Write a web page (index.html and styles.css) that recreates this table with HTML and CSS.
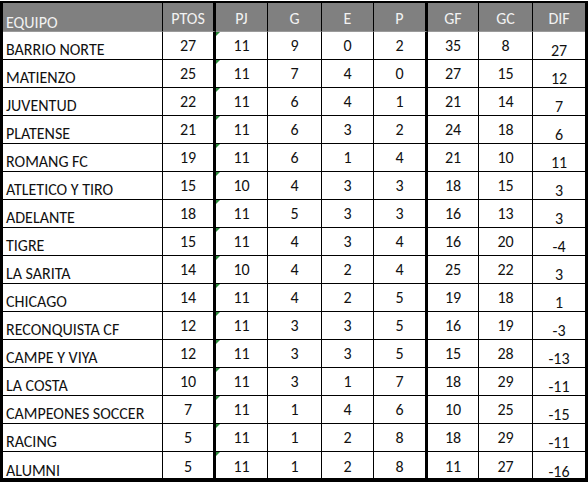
FILE: index.html
```html
<!DOCTYPE html>
<html lang="es">
<head>
<meta charset="utf-8">
<title>Tabla de posiciones</title>
<link rel="stylesheet" href="styles.css">
</head>
<body>
<div class="sheet">
  <div class="row head">
    <div class="c name">EQUIPO</div><div class="c thick">PTOS</div><div class="c">PJ</div><div class="c">G</div><div class="c">E</div><div class="c thick">P</div><div class="c">GF</div><div class="c">GC</div><div class="c last">DIF</div>
  </div>
  <div class="row"><div class="c name">BARRIO NORTE</div><div class="c thick">27</div><div class="c pj">11</div><div class="c">9</div><div class="c">0</div><div class="c thick">2</div><div class="c">35</div><div class="c">8</div><div class="c last dif">27</div></div>
  <div class="row"><div class="c name">MATIENZO</div><div class="c thick">25</div><div class="c pj">11</div><div class="c">7</div><div class="c">4</div><div class="c thick">0</div><div class="c">27</div><div class="c">15</div><div class="c last dif">12</div></div>
  <div class="row"><div class="c name">JUVENTUD</div><div class="c thick">22</div><div class="c pj">11</div><div class="c">6</div><div class="c">4</div><div class="c thick">1</div><div class="c">21</div><div class="c">14</div><div class="c last dif">7</div></div>
  <div class="row"><div class="c name">PLATENSE</div><div class="c thick">21</div><div class="c pj">11</div><div class="c">6</div><div class="c">3</div><div class="c thick">2</div><div class="c">24</div><div class="c">18</div><div class="c last dif">6</div></div>
  <div class="row"><div class="c name">ROMANG FC</div><div class="c thick">19</div><div class="c pj">11</div><div class="c">6</div><div class="c">1</div><div class="c thick">4</div><div class="c">21</div><div class="c">10</div><div class="c last dif">11</div></div>
  <div class="row"><div class="c name">ATLETICO Y TIRO</div><div class="c thick">15</div><div class="c pj">10</div><div class="c">4</div><div class="c">3</div><div class="c thick">3</div><div class="c">18</div><div class="c">15</div><div class="c last dif">3</div></div>
  <div class="row"><div class="c name">ADELANTE</div><div class="c thick">18</div><div class="c pj">11</div><div class="c">5</div><div class="c">3</div><div class="c thick">3</div><div class="c">16</div><div class="c">13</div><div class="c last dif">3</div></div>
  <div class="row"><div class="c name">TIGRE</div><div class="c thick">15</div><div class="c pj">11</div><div class="c">4</div><div class="c">3</div><div class="c thick">4</div><div class="c">16</div><div class="c">20</div><div class="c last dif">-4</div></div>
  <div class="row"><div class="c name">LA SARITA</div><div class="c thick">14</div><div class="c pj">10</div><div class="c">4</div><div class="c">2</div><div class="c thick">4</div><div class="c">25</div><div class="c">22</div><div class="c last dif">3</div></div>
  <div class="row"><div class="c name">CHICAGO</div><div class="c thick">14</div><div class="c pj">11</div><div class="c">4</div><div class="c">2</div><div class="c thick">5</div><div class="c">19</div><div class="c">18</div><div class="c last dif">1</div></div>
  <div class="row"><div class="c name">RECONQUISTA CF</div><div class="c thick">12</div><div class="c pj">11</div><div class="c">3</div><div class="c">3</div><div class="c thick">5</div><div class="c">16</div><div class="c">19</div><div class="c last dif">-3</div></div>
  <div class="row"><div class="c name">CAMPE Y VIYA</div><div class="c thick">12</div><div class="c pj">11</div><div class="c">3</div><div class="c">3</div><div class="c thick">5</div><div class="c">15</div><div class="c">28</div><div class="c last dif">-13</div></div>
  <div class="row"><div class="c name">LA COSTA</div><div class="c thick">10</div><div class="c pj">11</div><div class="c">3</div><div class="c">1</div><div class="c thick">7</div><div class="c">18</div><div class="c">29</div><div class="c last dif">-11</div></div>
  <div class="row"><div class="c name">CAMPEONES SOCCER</div><div class="c thick">7</div><div class="c pj">11</div><div class="c">1</div><div class="c">4</div><div class="c thick">6</div><div class="c">10</div><div class="c">25</div><div class="c last dif">-15</div></div>
  <div class="row"><div class="c name">RACING</div><div class="c thick">5</div><div class="c pj">11</div><div class="c">1</div><div class="c">2</div><div class="c thick">8</div><div class="c">18</div><div class="c">29</div><div class="c last dif">-11</div></div>
  <div class="row lastrow"><div class="c name">ALUMNI</div><div class="c thick">5</div><div class="c pj">11</div><div class="c">1</div><div class="c">2</div><div class="c thick">8</div><div class="c">11</div><div class="c">27</div><div class="c last dif">-16</div></div>
</div>
</body>
</html>
```
FILE: styles.css
```css
* { box-sizing: border-box; }
html, body { margin: 0; padding: 0; background: #fff; }
body {
  font-family: Carlito, Lato, "Liberation Sans", sans-serif;
  font-size: 16px;
  color: #111;
}
.sheet {
  width: 588px;
  height: 481px;
  margin-top: 1px;
  border: 3px solid #000;
  border-top-width: 2px;
  border-bottom-width: 4px;
}
.row {
  display: grid;
  grid-template-columns: 160px 53px 52px 54px 52px 54px 51px 54px 52px;
  height: 28px;
}
.head {
  background: #808080;
  color: #f2f2f2;
  height: 29px;
}
.c {
  position: relative;
  border-right: 1px solid #000;
  border-bottom: 1px solid #000;
  display: flex;
  align-items: flex-end;
  justify-content: center;
  line-height: 16px;
  padding-bottom: 5px;
  white-space: nowrap;
}
.head .c { border-bottom-color: #9a9a9a; padding-bottom: 4px; }
.head .name { padding-bottom: 0; }
.c.thick { border-right-width: 3px; }
.c.last { border-right: 0; }
.lastrow .c { border-bottom: 0; }
.name {
  justify-content: flex-start;
  padding-left: 3px;
  padding-bottom: 1px;
}
.dif { padding-bottom: 0; }
.pj::before {
  content: "";
  position: absolute;
  left: 0;
  top: 0;
  border-top: 4px solid #2a8a3a;
  border-right: 4px solid transparent;
}
```
